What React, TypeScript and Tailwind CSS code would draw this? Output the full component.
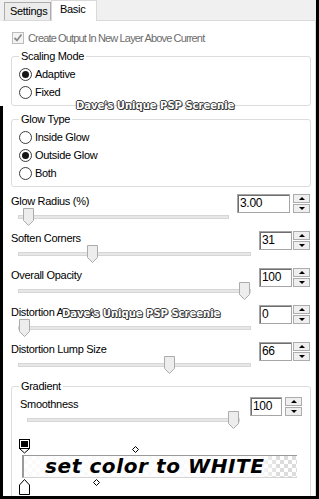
import React from 'react';

type RowProps = {
  label: string;
  value: string;
  pct: number;
  inputW: string;
  gap: string;
  trackPad?: string;
};

const Thumb = () => (
  <svg width="11" height="18" viewBox="0 0 11 18">
    <path d="M0.5 0.5H10.5V12.5L5.5 17.5L0.5 12.5Z" fill="#ededed" stroke="#acacac" />
  </svg>
);

const SpinBtn = ({ up }: { up?: boolean }) => (
  <div className="h-[9px] border border-[#acacac] bg-[#efefef] flex items-center justify-center">
    {up ? (
      <div className="w-0 h-0 border-l-[3px] border-r-[3px] border-b-[3px] border-l-transparent border-r-transparent border-b-black" />
    ) : (
      <div className="w-0 h-0 border-l-[3px] border-r-[3px] border-t-[3px] border-l-transparent border-r-transparent border-t-black" />
    )}
  </div>
);

const SpinBox = ({ value, inputW, gap }: { value: string; inputW: string; gap: string }) => (
  <div className="flex h-[19px]">
    <div className={`${inputW} h-[19px] bg-white border border-[#a5a5a5] shadow-[inset_1px_1px_0_#6e6e6e] pl-[2px] text-[12px] leading-[17px] text-black`}>
      {value}
    </div>
    <div className={`flex flex-col gap-px w-[17px] ${gap}`}>
      <SpinBtn up />
      <SpinBtn />
    </div>
  </div>
);

const SliderRow = ({ label, value, pct, inputW, gap, trackPad = 'pr-[8px]' }: RowProps) => (
  <div className="h-[37px] flex">
    <div className={`flex-1 flex flex-col ${trackPad}`}>
      <div className="h-[14px] leading-[14px]">{label}</div>
      <div className="relative mt-[7px] ml-[7px] h-[4px] bg-[#e7e7e7] border border-[#d6d6d6]">
        <div className="absolute top-[-8px]" style={{ left: `calc((100% - 11px) * ${pct})` }}>
          <Thumb />
        </div>
      </div>
    </div>
    <SpinBox value={value} inputW={inputW} gap={gap} />
  </div>
);

const Radio = ({ label, checked }: { label: string; checked?: boolean }) => (
  <div className="h-[18px] flex items-center pl-[7px] gap-[3px]">
    <div className="w-[13px] h-[13px] rounded-full border border-[#3c3c3c] bg-white flex items-center justify-center">
      {checked && <div className="w-[7px] h-[7px] rounded-full bg-[#151515]" />}
    </div>
    <span>{label}</span>
  </div>
);

const Watermark = ({ className }: { className: string }) => (
  <div
    className={`absolute font-['DejaVu_Sans',sans-serif] font-bold text-[10px] leading-[11px] text-white tracking-[0px] [text-shadow:1px_0_0_#3a3a3a,-1px_0_0_#3a3a3a,0_1px_0_#3a3a3a,0_-1px_0_#3a3a3a,1px_1px_0_#3a3a3a] ${className}`}
  >
    Dave's Unique PSP Screenie
  </div>
);

const Diamond = () => (
  <svg width="7" height="7" viewBox="0 0 7 7">
    <path d="M3.5 0.5L6.5 3.5L3.5 6.5L0.5 3.5Z" fill="white" stroke="black" />
  </svg>
);

export default function App() {
  return (
    <div className="w-[319px] h-[499px] bg-black flex overflow-hidden font-['Liberation_Sans',Arial,sans-serif] text-[11px] tracking-[-0.3px] text-black">
      <div className="w-[3px] flex flex-col">
        <div className="h-[21px] bg-[#f0f0f0]" />
        <div className="h-[85px] bg-white" />
      </div>

      <div className="w-[313px] h-[496px] flex flex-col bg-white">
        {/* tabs */}
        <div className="h-[21px] shrink-0 bg-[#f0f0f0] border-b border-[#d9d9d9] flex items-end pl-[1px]">
          <div className="h-[18px] w-[47px] border border-b-0 border-[#acacac] bg-[#ececec] pl-[5px] leading-[16px]">
            Settings
          </div>
          <div className="relative h-[21px] -mb-px w-[46px] bg-white border border-b-0 border-[#d9d9d9] pl-[8px] leading-[16px]">
            Basic
          </div>
        </div>

        <div className="relative flex-1 flex flex-col pl-[8px] pr-[4px] border-r border-[#dadada] overflow-hidden">
          <div className="mt-[10px] h-[14px] flex items-center gap-[4px] ml-[1px] text-[#6d6d6d]">
            <div className="w-[12px] h-[12px] border border-[#bcbcbc] bg-[#f4f4f4] flex items-center justify-center">
              <svg width="10" height="10" viewBox="0 0 10 10">
                <path d="M1.5 5L4 7.5L8.5 1.5" fill="none" stroke="#8c8c8c" strokeWidth="1.8" />
              </svg>
            </div>
            <span className="tracking-[-0.85px]">Create Output In New Layer Above Current</span>
          </div>

          <div className="relative mt-[11px] border border-[#dcdcdc] rounded-[3px] pt-[8px] pb-[4px]">
            <div className="absolute left-[7px] -top-[8px] bg-white px-[2px] leading-[14px]">Scaling Mode</div>
            <Radio label="Adaptive" checked />
            <Radio label="Fixed" />
          </div>

          <div className="relative mt-[13px] border border-[#dcdcdc] rounded-[3px] pt-[8px] pb-[4px]">
            <div className="absolute left-[7px] -top-[8px] bg-white px-[2px] leading-[14px]">Glow Type</div>
            <Radio label="Inside Glow" />
            <Radio label="Outside Glow" checked />
            <Radio label="Both" />
          </div>

          <div className="mt-[7px] mr-[1px] flex flex-col">
            <SliderRow label="Glow Radius (%)" value="3.00" pct={0.02} inputW="w-[53px]" gap="ml-[3px]" />
            <SliderRow label="Soften Corners" value="31" pct={0.31} inputW="w-[33px]" gap="ml-[1px]" />
            <SliderRow label="Overall Opacity" value="100" pct={1} inputW="w-[33px]" gap="ml-[1px]" />
            <SliderRow label="Distortion Amount" value="0" pct={0} inputW="w-[33px]" gap="ml-[1px]" />
            <SliderRow label="Distortion Lump Size" value="66" pct={0.66} inputW="w-[33px]" gap="ml-[1px]" />
          </div>

          <div className="relative mt-[7px] h-[130px] shrink-0 border border-[#dcdcdc] rounded-[3px] pt-[10px] pl-[8px] pr-[8px]">
            <div className="absolute left-[7px] -top-[8px] bg-white px-[2px] leading-[14px]">Gradient</div>
            <SliderRow label="Smoothness" value="100" pct={1} inputW="w-[32px]" gap="ml-[3px]" trackPad="pr-[10px]" />

            <div className="relative h-[21px]">
              <div className="absolute left-[-1px] top-[5px]">
                <svg width="11" height="15" viewBox="0 0 11 15">
                  <rect x="0.5" y="0.5" width="10" height="9" fill="white" stroke="black" />
                  <rect x="2" y="2" width="7" height="6" fill="black" />
                  <path d="M1 10L5.5 14L10 10" fill="white" stroke="black" />
                </svg>
              </div>
              <div className="absolute left-[112px] top-[12px]">
                <Diamond />
              </div>
            </div>

            <div className="ml-[2px] w-[275px] h-[23px] border-t border-l-2 border-[#9a9a9a] border-b border-b-[#d4d4d4] bg-[image:linear-gradient(to_right,rgba(255,255,255,0.85),rgba(255,255,255,0.85)_87%,rgba(255,255,255,0)_93%),repeating-conic-gradient(#dcdcdc_0_25%,#ffffff_0_50%)] bg-[length:100%_100%,8px_8px] pl-[21px] font-['DejaVu_Sans',sans-serif] font-bold italic text-[20px] leading-[21px] tracking-[0.6px] whitespace-nowrap overflow-hidden">
              set color to WHITE
            </div>

            <div className="relative h-[17px]">
              <div className="absolute left-[-1px] top-[1px]">
                <svg width="11" height="16" viewBox="0 0 11 16">
                  <path d="M0.5 15.5V6L5.5 0.5L10.5 6V15.5Z" fill="white" stroke="black" />
                </svg>
              </div>
              <div className="absolute left-[73px] top-[1px]">
                <Diamond />
              </div>
            </div>
          </div>

          <Watermark className="left-[73px] top-[79px]" />
          <Watermark className="left-[59px] top-[287px]" />
        </div>
      </div>
    </div>
  );
}
